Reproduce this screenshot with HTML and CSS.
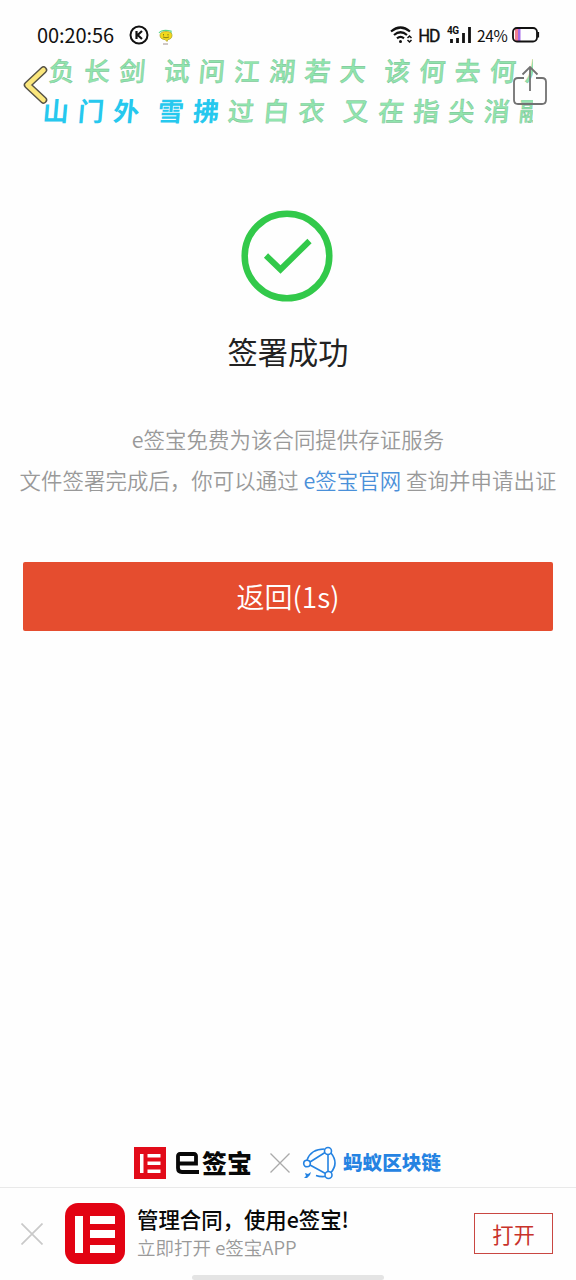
FILE: index.html
```html
<!DOCTYPE html>
<html lang="zh-CN">
<head>
<meta charset="utf-8">
<meta name="viewport" content="width=device-width, initial-scale=1">
<title>签署成功</title>
<link rel="stylesheet" href="styles.css">
</head>
<body>
<div class="screen">
  <header class="top">
    <div class="status">
      <span class="clock">00:20:56</span>
      <svg class="k-icon" width="20" height="20" viewBox="0 0 20 20" fill="none" stroke="#111"><circle cx="10" cy="10" r="8.500" stroke-width="2"/><path d="M7.500 6v8M13 6L8.700 10l4.300 4" stroke-width="2.200"/></svg>
      <svg class="chat-icon" width="16" height="18" viewBox="0 0 16 18"><path d="M1 5Q4 1 13 3v3" fill="none" stroke="#58d68a" stroke-width="1.200"/><path d="M8 3.500c4 0 6 1.500 6 4S12 11.500 10 11.500l-1 2-2-2C4 11.500 2 10 2 7.500s2-4 6-4z" fill="#f2d91c" stroke="#a79c22" stroke-width=".7"/><path d="M5.500 6v1.500M10 6v1.500M5 9q3 1.500 6 0" fill="none" stroke="#6d6a13" stroke-width=".8"/><path d="M5 16h5" stroke="#8b7775" stroke-width=".8"/></svg>
      <div class="signals">
        <svg width="23" height="18" viewBox="0 0 23 18" fill="none" stroke="#111" stroke-width="2.200"><path d="M1 5.500Q10.500-2.500 20 5.500M4 9Q10.500 3.500 17 9M7 12.300q3.500-3 7 0"/><circle cx="10.500" cy="15.500" r="1.500" fill="#111" stroke="none"/><path d="M17.500 12l2-2 2 2M17.500 14l2 2 2-2" stroke-width="1.500"/></svg>
        <span class="hd">HD</span>
        <span class="cell"><span class="net">4G</span><svg width="25" height="18" viewBox="0 0 25 18" stroke="#111" stroke-width="2.800"><path d="M4.500 13v4M10.500 12v5M16.500 7v10M22.500 1v16"/></svg></span>
        <span class="percent">24%</span>
        <svg width="28" height="16" viewBox="0 0 28 16"><rect x="3" y="2" width="3.500" height="12" fill="#f27f91"/><rect x="6" y="2" width="2.500" height="12" fill="#a66be8"/><rect x="1" y="1" width="24" height="13.500" rx="4" fill="none" stroke="#111" stroke-width="1.800"/><path d="M26.200 5v5.500" stroke="#111" stroke-width="1.800"/></svg>
      </div>
    </div>
    <svg class="back" width="26" height="42" viewBox="0 0 26 42" fill="none" stroke-linecap="round" stroke-linejoin="round"><path d="M21.500 6L5.500 21 21.500 36" stroke="#555246" stroke-width="7.500"/><path d="M21.500 6L5.500 21 21.500 36" stroke="#fbe77c" stroke-width="4.600"/></svg>
    <svg class="share" width="36" height="42" viewBox="0 0 36 42" fill="none" stroke="#727272" stroke-width="1.800"><path d="M12 13H6q-4 0-4 4v18q0 4 4 4h24q4 0 4-4V17q0-4-4-4h-6M18 26V3M10.500 9.500L18 2l7.500 7.500"/></svg>
    <div class="lyrics">
      <div class="line first">负长剑 试问江湖若大 该何去何从</div>
      <div class="line second"><span class="sung">山门外 雪拂</span>过白衣 又在指尖消融</div>
    </div>
  </header>

  <main class="result">
    <svg class="success" width="92" height="92" viewBox="0 0 92 92" fill="none" stroke="#32c94a"><circle cx="46" cy="46" r="42.300" stroke-width="6.500"/><path d="M25 45.500L39.500 59.500 68.500 31" stroke-width="6"/></svg>
    <h1 class="title">签署成功</h1>
    <p class="note">e签宝免费为该合同提供存证服务<br>文件签署完成后，你可以通过 <a class="link">e签宝官网</a> 查询并申请出证</p>
    <button class="return">返回(1s)</button>
  </main>

  <div class="brands">
    <svg width="32" height="32" viewBox="0 0 32 32"><path fill="#e20b19" d="M0 0h32v32H0z"/><path fill="#fff" d="M6 7h3.500v19H6zM13.500 7h13v3.500h-13zM13.500 14.500h13V18h-13zM13.500 22.500h13V26h-13z"/></svg>
    <svg class="brand-e" width="26" height="24" viewBox="0 0 26 24" fill="none" stroke="#080808" stroke-width="3.800"><path d="M3 12.500h18V5q0-2-2-2H5Q3 3 3 5v12q0 4 4 4h17"/></svg>
    <span class="brand-name">签宝</span>
    <svg class="times" width="20" height="20" viewBox="0 0 20 20" stroke="#aaa" stroke-width="1.300"><path d="M.5.5l19 19M19.500.5l-19 19"/></svg>
    <svg class="chain" width="36" height="34" viewBox="0 0 36 34" fill="none" stroke="#2583e2" stroke-width="1.600"><circle cx="5" cy="17.500" r="3.300"/><circle cx="26" cy="5" r="3.500"/><circle cx="26.500" cy="29" r="3.500"/><path d="M8 16L23 6.500M8 19L23.500 27.500M26 8.500v17M29 7q8 10 0 19.500M5 14Q9 3 22.500 3M23 30.500q-5 .5-9-1"/><path d="M3 27l3 1 3-2-1 3-3 3H2l2-2z" fill="#2583e2" stroke="none"/></svg>
    <span class="chain-name">蚂蚁区块链</span>
  </div>

  <footer class="banner">
    <svg class="close" width="22" height="22" viewBox="0 0 22 22" stroke="#c9c9c9" stroke-width="1.700"><path d="M.5.5l21 21M21.500.5l-21 21"/></svg>
    <svg class="app-icon" width="60" height="61" viewBox="0 0 60 61"><rect width="60" height="61" rx="13" fill="#e20313"/><path fill="#fff" d="M10 13h8v37h-8zM25 13h25v8H25zM25 27h25v8H25zM25 42h25v8H25z"/></svg>
    <div class="copy"><div class="copy-title">管理合同，使用e签宝!</div><div class="copy-sub">立即打开 e签宝APP</div></div>
    <button class="open">打开</button>
    <div class="home-bar"></div>
  </footer>
</div>
</body>
</html>
```
FILE: styles.css
```css
* { box-sizing: border-box; }
body { margin: 0; background: #fefefe; font-family: "Noto Sans CJK SC", sans-serif; }
button { font-family: inherit; padding: 0; }
.screen { width: 576px; height: 1280px; display: flex; flex-direction: column; overflow: hidden; }
.top { position: relative; height: 210px; flex: none; padding-top: 20px; }
.status { height: 30px; padding: 0 36px 0 37px; display: flex; align-items: center; color: #111; }
.clock { width: 78px; font: 20px/30px "Noto Sans CJK SC", sans-serif; letter-spacing: -0.1px; white-space: nowrap; }
.k-icon { margin-left: 14px; }
.chat-icon { margin-left: 9px; margin-top: 4px; }
.signals { margin-left: auto; display: flex; align-items: center; }
.hd { width: 21px; margin-left: 5px; font: 400 17px/30px "Noto Sans CJK SC", sans-serif; letter-spacing: -1.6px; -webkit-text-stroke: 0.4px #111; }
.cell { position: relative; display: flex; margin-left: 8px; }
.net { position: absolute; left: 0; top: -1px; font: 700 10px/12px Roboto, sans-serif; letter-spacing: -0.4px; }
.percent { width: 31px; margin: 0 4px 0 5px; font: 15.500px/30px "Noto Sans CJK SC", sans-serif; letter-spacing: -0.3px; }
.back { position: absolute; left: 22px; top: 64px; z-index: 2; }
.share { position: absolute; left: 512px; top: 65px; z-index: 2; }
.lyrics { position: absolute; left: 38px; top: 50px; width: 495px; overflow: hidden; }
.line { height: 40px; white-space: nowrap; color: #91e5ae; font-size: 26px; line-height: 40px; font-weight: 500; letter-spacing: 9.200px; word-spacing: -5.800px; transform: skewX(-5deg); -webkit-text-stroke: 0.4px #70bd8c; }
.first { padding-left: 11px; }
.second { padding-left: 5px; }
.sung { color: #26c8ee; font-weight: 700; -webkit-text-stroke: 0; }
.result { display: flex; flex-direction: column; align-items: center; }
.success { margin-right: 2px; }
.title { margin: 27px 0 0; font-size: 30.200px; font-weight: 400; line-height: 44px; color: #222; }
.note { margin: 45px 0 0; text-align: center; color: #999; font-size: 21.400px; letter-spacing: 0.08px; line-height: 41px; white-space: nowrap; font-weight: 350; }
.link { color: #4a90d9; }
.return { width: 530px; height: 69px; margin-top: 62px; border: 0; border-radius: 2px; background: #e54d2f; color: #fff; font-size: 28px; font-weight: 350; line-height: 69px; }
.brands { margin-top: auto; flex: none; height: 47px; padding-left: 134px; padding-bottom: 1px; display: flex; align-items: center; }
.brand-e { margin-left: 9px; }
.brand-name { margin-left: 1px; margin-top: -2px; width: 52px; font-size: 25px; font-weight: 900; color: #080808; line-height: 32px; }
.times { margin-left: 16px; }
.chain { margin-left: 12px; }
.chain-name { margin-left: 5px; margin-top: -2px; font-size: 19.600px; font-weight: 900; color: #2583e2; line-height: 32px; }
.banner { position: relative; flex: none; height: 93px; padding: 0 23px 0 21px; border-top: 1px solid #e9e9e9; display: flex; align-items: center; }
.app-icon { margin-left: 22px; margin-top: -1px; }
.copy { margin-left: 12px; margin-top: -4px; }
.copy-title { font-size: 21.400px; line-height: 31px; font-weight: 500; color: #080808; }
.copy-sub { font-size: 18.500px; line-height: 27px; color: #999; font-weight: 350; }
.open { width: 79px; height: 41px; margin-left: auto; margin-top: -1px; border: 1px solid #c94742; background: transparent; color: #c8322b; font-size: 21.330px; line-height: 37px; }
.home-bar { position: absolute; left: 192px; bottom: 0; width: 192px; height: 5px; border-radius: 3px; background: #e4e4e4; }
```
